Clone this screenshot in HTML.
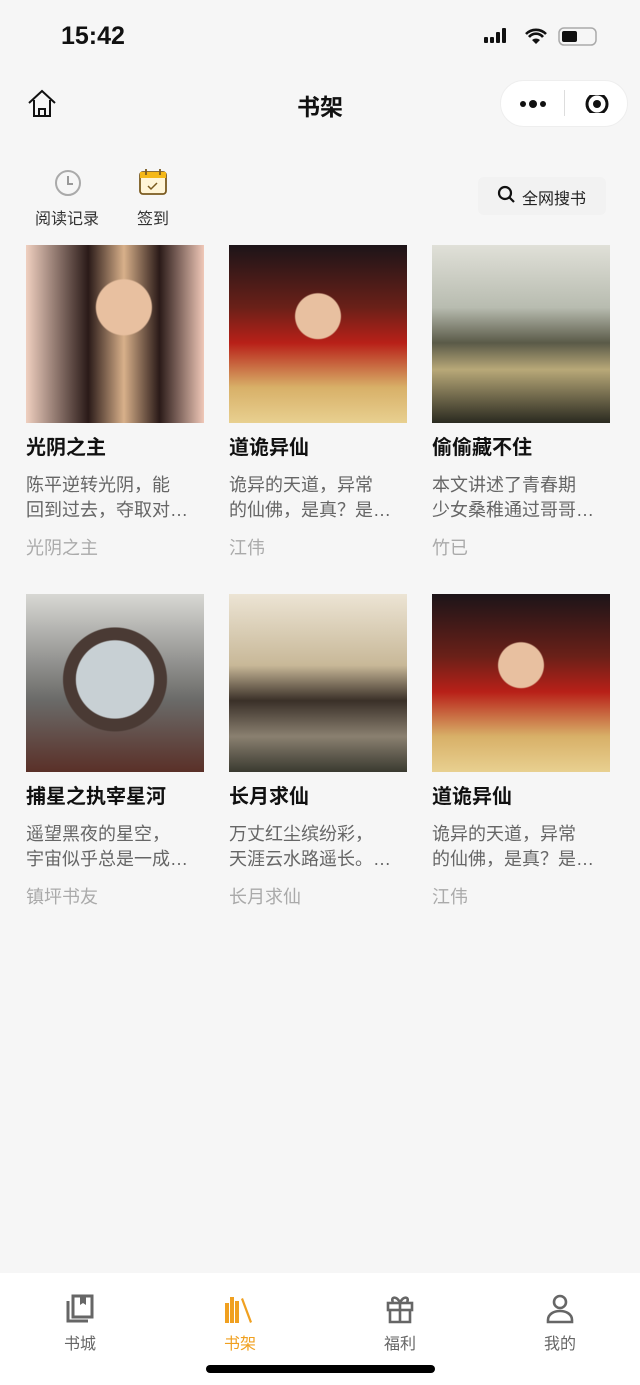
<!DOCTYPE html>
<html><head><meta charset="utf-8"><style>
*{margin:0;padding:0;box-sizing:border-box}
body{width:640px;height:1385px;background:#f6f6f6;font-family:"Liberation Sans","Noto Sans CJK SC",sans-serif;position:relative;overflow:hidden}
.abs{position:absolute}
.cover{position:absolute;width:178px;height:178px}
.t{position:absolute;font-size:20px;font-weight:bold;color:#111;line-height:24px}
.d{position:absolute;font-size:18px;color:#666;line-height:25px;width:180px}
.a{position:absolute;font-size:18px;color:#aaa;line-height:22px}
.tab{position:absolute;top:1290px;width:80px;text-align:center;font-size:16px;color:#666}
</style></head><body>
<div class="abs" style="left:61px;top:22px;font-size:25px;font-weight:bold;color:#111">15:42</div>
<svg class="abs" style="left:484px;top:27px" width="116" height="20">
<g fill="#111"><rect x="0" y="10" width="4" height="6" rx="1"/><rect x="6" y="10" width="4" height="6" rx="1"/><rect x="12" y="5" width="4" height="11" rx="1"/><rect x="18" y="1" width="4" height="15" rx="1"/></g>
<path d="M42 7a14 14 0 0 1 20 0M45 10a9 9 0 0 1 14 0" stroke="#111" stroke-width="2.6" fill="none"/><path d="M52 17l-4-4a6 6 0 0 1 8 0z" fill="#111"/>
<rect x="75" y="1" width="37" height="17" rx="5" fill="none" stroke="#aaa" stroke-width="1.5"/><rect x="78" y="4" width="15" height="11" rx="2" fill="#111"/>
</svg>
<svg class="abs" style="left:26px;top:88px" width="32" height="32"><path d="M3 15L16 3l13 12M8 12v16h16V12M13 28v-7h6v7" stroke="#111" stroke-width="2" fill="none"/></svg>
<div class="abs" style="left:0;width:640px;top:88px;text-align:center;font-size:23px;font-weight:bold;color:#111">书架</div>
<div class="abs" style="left:500px;top:80px;width:128px;height:47px;background:#fff;border-radius:24px;border:1px solid #eee"></div>
<div class="abs" style="left:564px;top:90px;width:1px;height:26px;background:#ddd"></div>
<svg class="abs" style="left:518px;top:95px" width="100" height="18"><circle cx="5" cy="9" r="3" fill="#111"/><circle cx="15" cy="9" r="4" fill="#111"/><circle cx="25" cy="9" r="3" fill="#111"/><circle cx="79" cy="9" r="10" fill="none" stroke="#111" stroke-width="3"/><circle cx="79" cy="9" r="4" fill="#111"/></svg>
<svg class="abs" style="left:52px;top:166px" width="32" height="32"><circle cx="16" cy="17" r="12" fill="none" stroke="#aaa" stroke-width="2"/><path d="M16 10v8h5" stroke="#999" stroke-width="2" fill="none"/></svg>
<svg class="abs" style="left:138px;top:168px" width="30" height="28"><rect x="2" y="4" width="26" height="22" rx="3" fill="#fff5d8" stroke="#7a5a20" stroke-width="1.8"/><rect x="2" y="4" width="26" height="6" fill="#f5b817"/><path d="M8 1v6M22 1v6" stroke="#7a5a20" stroke-width="1.8"/><path d="M10 18l3 3 6-6" stroke="#7a5a20" stroke-width="1.5" fill="none"/></svg>
<div class="abs" style="left:35px;top:205px;font-size:16px;color:#333">阅读记录</div>
<div class="abs" style="left:137px;top:205px;font-size:16px;color:#333">签到</div>
<div class="abs" style="left:478px;top:177px;width:128px;height:38px;background:#f2f2f2;border-radius:6px"></div>
<svg class="abs" style="left:497px;top:185px" width="20" height="20"><circle cx="8" cy="8" r="6" fill="none" stroke="#111" stroke-width="2.2"/><path d="M12 12l5 5" stroke="#111" stroke-width="2.2"/></svg>
<div class="abs" style="left:522px;top:185px;font-size:16px;color:#222">全网搜书</div>

<div class="cover" style="left:26px;top:245px;background:radial-gradient(circle at 55% 35%,#e8c0a0 0 18%,transparent 19%),linear-gradient(90deg,#f0d0c0 0%,#2a1a18 35%,#d8b08a 55%,#2a1a18 75%,#f0c8b8 100%)"></div>
<div class="cover" style="left:229px;top:245px;background:radial-gradient(circle at 50% 40%,#e8c0a0 0 16%,transparent 17%),linear-gradient(180deg,#1c1418 0%,#6a2018 35%,#b82018 55%,#d8b068 80%,#e8d090 100%)"></div>
<div class="cover" style="left:432px;top:245px;background:linear-gradient(180deg,#e0e0d8 0%,#b8bcb0 35%,#5a5a48 55%,#b8a878 70%,#2a2a20 100%)"></div>
<div class="cover" style="left:26px;top:594px;background:radial-gradient(circle at 50% 48%,#c8d0d4 0 30%,#4a3a34 31% 40%,transparent 41%),linear-gradient(180deg,#d8d8d4,#6a6a68 60%,#5a3028 100%)"></div>
<div class="cover" style="left:229px;top:594px;background:linear-gradient(180deg,#ece4d4 0%,#c8b898 40%,#3a3028 60%,#8a8070 80%,#3a3a30 100%)"></div>
<div class="cover" style="left:432px;top:594px;background:radial-gradient(circle at 50% 40%,#e8c0a0 0 16%,transparent 17%),linear-gradient(180deg,#1c1418 0%,#6a2018 35%,#b82018 55%,#d8b068 80%,#e8d090 100%)"></div>

<div class="t" style="left:26px;top:436px">光阴之主</div>
<div class="d" style="left:26px;top:473px">陈平逆转光阴，能<br>回到过去，夺取对…</div>
<div class="a" style="left:26px;top:537px">光阴之主</div>
<div class="t" style="left:229px;top:436px">道诡异仙</div>
<div class="d" style="left:229px;top:473px">诡异的天道，异常<br>的仙佛，是真？是…</div>
<div class="a" style="left:229px;top:537px">江伟</div>
<div class="t" style="left:432px;top:436px">偷偷藏不住</div>
<div class="d" style="left:432px;top:473px">本文讲述了青春期<br>少女桑稚通过哥哥…</div>
<div class="a" style="left:432px;top:537px">竹已</div>

<div class="t" style="left:26px;top:785px">捕星之执宰星河</div>
<div class="d" style="left:26px;top:822px">遥望黑夜的星空，<br>宇宙似乎总是一成…</div>
<div class="a" style="left:26px;top:886px">镇坪书友</div>
<div class="t" style="left:229px;top:785px">长月求仙</div>
<div class="d" style="left:229px;top:822px">万丈红尘缤纷彩，<br>天涯云水路遥长。…</div>
<div class="a" style="left:229px;top:886px">长月求仙</div>
<div class="t" style="left:432px;top:785px">道诡异仙</div>
<div class="d" style="left:432px;top:822px">诡异的天道，异常<br>的仙佛，是真？是…</div>
<div class="a" style="left:432px;top:886px">江伟</div>

<div class="abs" style="left:0;top:1273px;width:640px;height:112px;background:#fff"></div>
<svg class="abs" style="left:64px;top:1293px" width="32" height="32"><path d="M4 8v20h20" stroke="#666" stroke-width="3" fill="none"/><rect x="9" y="3" width="19" height="21" fill="none" stroke="#666" stroke-width="3"/><path d="M16 3v9l3-2 3 2V3z" fill="#666"/></svg>
<svg class="abs" style="left:224px;top:1293px" width="32" height="32"><g fill="#f0a020"><rect x="1" y="10" width="4" height="20"/><rect x="6" y="4" width="4" height="26"/><rect x="11" y="8" width="4" height="22"/><path d="M17 6l2-1 9 24-2 1z"/></g></svg>
<svg class="abs" style="left:384px;top:1293px" width="32" height="32"><rect x="4" y="10" width="24" height="7" fill="none" stroke="#666" stroke-width="2.6"/><path d="M6 17v12h20V17M16 10v19M16 10c-3-8-10-6-7-1M16 10c3-8 10-6 7-1" stroke="#666" stroke-width="2.6" fill="none"/></svg>
<svg class="abs" style="left:544px;top:1293px" width="32" height="32"><circle cx="16" cy="9" r="6" fill="none" stroke="#666" stroke-width="2.6"/><path d="M4 29v-2c0-6 6-9 12-9s12 3 12 9v2z" fill="none" stroke="#666" stroke-width="2.6"/></svg>
<div class="tab" style="left:40px;top:1330px">书城</div>
<div class="tab" style="left:200px;top:1330px;color:#f0a020">书架</div>
<div class="tab" style="left:360px;top:1330px">福利</div>
<div class="tab" style="left:520px;top:1330px">我的</div>
<div class="abs" style="left:206px;top:1365px;width:229px;height:8px;border-radius:4px;background:#000"></div>
</body></html>
